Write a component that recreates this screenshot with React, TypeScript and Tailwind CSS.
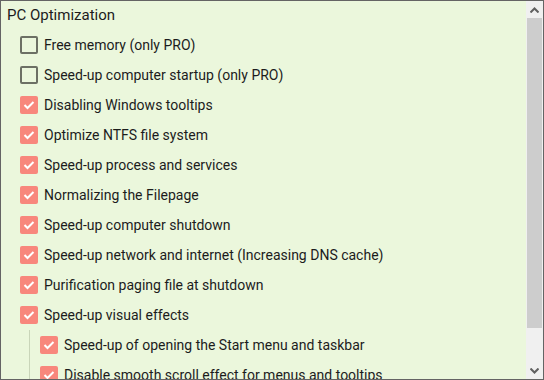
import React from 'react';

type Item = { label: string; checked: boolean; child?: boolean };

const items: Item[] = [
  { label: 'Free memory (only PRO)', checked: false },
  { label: 'Speed-up computer startup (only PRO)', checked: false },
  { label: 'Disabling Windows tooltips', checked: true },
  { label: 'Optimize NTFS file system', checked: true },
  { label: 'Speed-up process and services', checked: true },
  { label: 'Normalizing the Filepage', checked: true },
  { label: 'Speed-up computer shutdown', checked: true },
  { label: 'Speed-up network and internet (Increasing DNS cache)', checked: true },
  { label: 'Purification paging file at shutdown', checked: true },
  { label: 'Speed-up visual effects', checked: true },
  { label: 'Speed-up of opening the Start menu and taskbar', checked: true, child: true },
  { label: 'Disable smooth scroll effect for menus and tooltips', checked: true, child: true },
];

function Box({ checked }: { checked: boolean }) {
  if (!checked) {
    return <div className="w-[18px] h-[18px] shrink-0 rounded-[2px] border-2 border-[#6c7064]" />;
  }
  return (
    <div className="w-[18px] h-[18px] shrink-0 rounded-[2px] bg-[#f8877c] flex items-center justify-center">
      <svg width="12" height="10" viewBox="0 0 12 10">
        <path d="M1.5 5 L4.5 8 L10.5 2" fill="none" stroke="#ffffff" strokeWidth="2" />
      </svg>
    </div>
  );
}

function Row({ it }: { it: Item }) {
  return (
    <div className="flex items-center gap-[6px] h-[30px] text-[14px]">
      <Box checked={it.checked} />
      <span>{it.label}</span>
    </div>
  );
}

export default function App() {
  return (
    <div
      className="w-[544px] h-[380px] border border-[#646464] bg-[#ebf7dc] flex overflow-hidden text-[#1c1c1c]"
      style={{ fontFamily: 'Roboto, "Liberation Sans", sans-serif' }}
    >
      <div className="flex-1 overflow-hidden">
        <div className="pl-[6px] pt-[4px] h-[24px] text-[15px] leading-[20px]">PC Optimization</div>
        <div className="pl-[19px] pt-[5px]">
          {items.filter(i => !i.child).map((it, i) => (
            <Row key={i} it={it} />
          ))}
          <div className="ml-[9px] border-l border-[#c9d5b9] pl-[10px]">
            {items.filter(i => i.child).map((it, i) => (
              <Row key={i} it={it} />
            ))}
          </div>
        </div>
      </div>

      {/* scrollbar */}
      <div className="w-[17px] h-full bg-[#f0f0f0] flex flex-col">
        <div className="h-[17px] flex items-center justify-center">
          <svg width="9" height="6" viewBox="0 0 9 6">
            <path d="M0.5 5.5 L4.5 1.5 L8.5 5.5" fill="none" stroke="#606060" strokeWidth="2" />
          </svg>
        </div>
        <div className="mx-[1px] h-[310px] bg-[#cdcdcd]" />
        <div className="flex-1" />
        <div className="h-[17px] flex items-center justify-center">
          <svg width="9" height="6" viewBox="0 0 9 6">
            <path d="M0.5 0.5 L4.5 4.5 L8.5 0.5" fill="none" stroke="#606060" strokeWidth="2" />
          </svg>
        </div>
      </div>
    </div>
  );
}
